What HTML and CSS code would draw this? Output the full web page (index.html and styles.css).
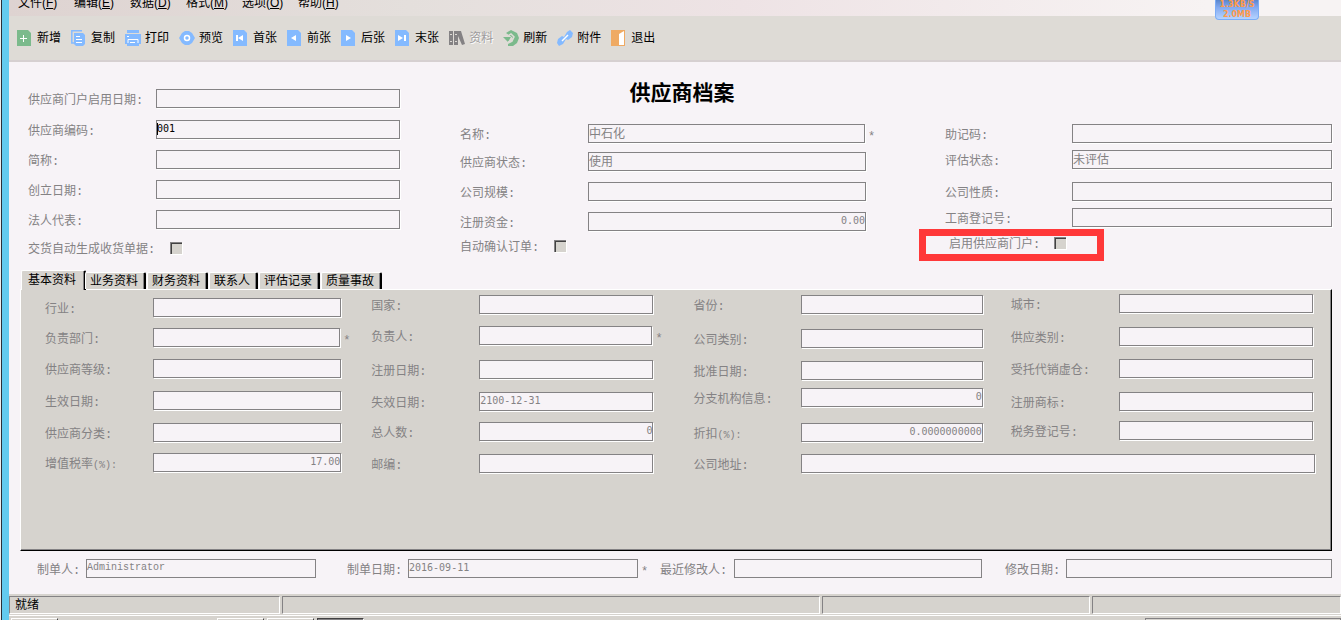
FILE: index.html
```html
<!DOCTYPE html>
<html lang="zh-CN">
<head>
<meta charset="utf-8">
<title>供应商档案</title>
<link rel="stylesheet" href="styles.css">
</head>
<body>
<div class="desktop-edge"></div>
<div class="window">
  <nav class="menubar">
    <button>文件(<u>F</u>)</button>
    <button>编辑(<u>E</u>)</button>
    <button>数据(<u>D</u>)</button>
    <button>格式(<u>M</u>)</button>
    <button>选项(<u>O</u>)</button>
    <button>帮助(<u>H</u>)</button>
  </nav>
  <div class="netmeter"><span>1.3KB/S</span><span>2.0MB</span></div>

  <div class="toolbar">
    <button><svg viewBox="0 0 16 16"><path fill="#7bba8c" d="M0 0h11l3 3v13H0z"/><path stroke="#fff" d="M3 8.500h7M6.500 5v7"/></svg>新增</button>
    <button><svg viewBox="0 0 16 16"><path fill="none" stroke="#84baff" stroke-width="1.500" d="M11 .8H.8V13H3"/><path fill="#84baff" d="M3 3h9l2 2v9l-2 2H5l-2-2z"/><path stroke="#fff" d="M5 6.500h4M5 9.500h6M5 12.500h6"/></svg>复制</button>
    <button><svg viewBox="0 0 16 16"><path fill="#84baff" d="M2 0h12v3H2zM0 4h16v10h-2v2H2v-2H0z"/><path stroke="#fff" fill="none" d="M2 6.500h2M3 13V9.500h10V13M5 12.500h5"/></svg>打印</button>
    <button><svg viewBox="0 0 16 16"><path fill="#84baff" d="M0 8l3-5 3-2h4l3 2 3 5-3 5-3 2H6l-3-2z"/><circle cx="8" cy="8" r="2.500" fill="none" stroke="#fff" stroke-width="1.500"/></svg>预览</button>
    <button><svg viewBox="0 0 16 16"><path fill="#84baff" d="M0 0h11l3 3v13H0z"/><path fill="#fff" d="M3 5h2v6H3zM10 5v6L5 8z"/></svg>首张</button>
    <button><svg viewBox="0 0 16 16"><path fill="#84baff" d="M0 0h11l3 3v13H0z"/><path fill="#fff" d="M9 5v6L4 8z"/></svg>前张</button>
    <button><svg viewBox="0 0 16 16"><path fill="#84baff" d="M0 0h11l3 3v13H0z"/><path fill="#fff" d="M5 5v6l5-3z"/></svg>后张</button>
    <button><svg viewBox="0 0 16 16"><path fill="#84baff" d="M0 0h11l3 3v13H0z"/><path fill="#fff" d="M9 5h2v6H9zM3 5v6l5-3z"/></svg>末张</button>
    <button class="off"><svg viewBox="0 0 16 16"><path fill="#848284" d="M0 1h4v14H0zM5 1h4v14H5zM9 1h3l4 13-3 1-4-9z"/><path stroke="#dedbd6" d="M1 4.500h2M1 11.500h2M6 4.500h2M6 11.500h2"/></svg>资料</button>
    <button><svg viewBox="0 0 16 16"><path fill="#7bba8c" d="M0 7h8l-3 5zM3 3l5-3 6 3 2 5-2 5-4 3H5v-2l4-2 1-4-4-3z"/><path fill="none" stroke="#dedbd6" stroke-width="1.500" d="M5 6l3-2 3 3-2 4-4 1"/></svg>刷新</button>
    <button><svg viewBox="0 0 16 16"><path fill="#84baff" d="M10 2l3-2 3 3-1 4-4 3-2-1-3 5-4 2-2-3 1-4 4-3 2 1z"/><path stroke="#fff" stroke-width="1.500" d="M5 11l6-6"/></svg>附件</button>
    <button><svg viewBox="0 0 16 16"><path fill="#efaa63" d="M0 0h14v16H0z"/><path fill="#fff" d="M8 4l5-3v14H8z"/></svg>退出</button>
  </div>

  <main class="sheet">
    <section class="header">
      <div class="col h1">
        <div class="field"><label for="a1">供应商门户启用日期:</label><input id="a1"></div>
        <div class="field"><label for="a2">供应商编码:</label><input id="a2" class="num active" value="001"></div>
        <div class="field"><label for="a3">简称:</label><input id="a3"></div>
        <div class="field"><label for="a4">创立日期:</label><input id="a4"></div>
        <div class="field"><label for="a5">法人代表:</label><input id="a5"></div>
        <div class="field check wide"><label for="a6">交货自动生成收货单据:</label><input type="checkbox" id="a6"></div>
      </div>
      <div class="col h2">
        <h1>供应商档案</h1>
        <div class="field"><label for="b1">名称:</label><input id="b1" value="中石化"><span class="star">*</span></div>
        <div class="field"><label for="b2">供应商状态:</label><input id="b2" value="使用"></div>
        <div class="field"><label for="b3">公司规模:</label><input id="b3"></div>
        <div class="field"><label for="b4">注册资金:</label><input id="b4" class="num right" value="0.00"></div>
        <div class="field check"><label for="b5">自动确认订单:</label><input type="checkbox" id="b5"></div>
      </div>
      <div class="col h3">
        <div class="field"><label for="c1">助记码:</label><input id="c1"></div>
        <div class="field"><label for="c2">评估状态:</label><input id="c2" value="未评估"></div>
        <div class="field"><label for="c3">公司性质:</label><input id="c3"></div>
        <div class="field"><label for="c4">工商登记号:</label><input id="c4"></div>
        <div class="field check marked"><label for="c5">启用供应商门户:</label><input type="checkbox" id="c5"></div>
      </div>
    </section>

    <div class="tabs" role="tablist">
      <button role="tab" class="current" aria-selected="true">基本资料</button>
      <button role="tab">业务资料</button>
      <button role="tab">财务资料</button>
      <button role="tab">联系人</button>
      <button role="tab">评估记录</button>
      <button role="tab">质量事故</button>
    </div>
    <section class="panel" role="tabpanel">
      <div class="col p1">
        <div class="field"><label for="d1">行业:</label><input id="d1"></div>
        <div class="field"><label for="d2">负责部门:</label><input id="d2"><span class="star">*</span></div>
        <div class="field"><label for="d3">供应商等级:</label><input id="d3"></div>
        <div class="field"><label for="d4">生效日期:</label><input id="d4"></div>
        <div class="field"><label for="d5">供应商分类:</label><input id="d5"></div>
        <div class="field"><label for="d6">增值税率<small>(%):</small></label><input id="d6" class="num right" value="17.00"></div>
      </div>
      <div class="col p2">
        <div class="field"><label for="e1">国家:</label><input id="e1"></div>
        <div class="field"><label for="e2">负责人:</label><input id="e2"><span class="star">*</span></div>
        <div class="field"><label for="e3">注册日期:</label><input id="e3"></div>
        <div class="field"><label for="e4">失效日期:</label><input id="e4" class="num" value="2100-12-31"></div>
        <div class="field"><label for="e5">总人数:</label><input id="e5" class="num right" value="0"></div>
        <div class="field"><label for="e6">邮编:</label><input id="e6"></div>
      </div>
      <div class="region">
        <div class="pair">
          <div class="col p3">
            <div class="field"><label for="f1">省份:</label><input id="f1"></div>
            <div class="field"><label for="f2">公司类别:</label><input id="f2"></div>
            <div class="field"><label for="f3">批准日期:</label><input id="f3"></div>
            <div class="field"><label for="f4">分支机构信息:</label><input id="f4" class="num right" value="0"></div>
            <div class="field"><label for="f5">折扣<small>(%):</small></label><input id="f5" class="num right" value="0.0000000000"></div>
          </div>
          <div class="col p4">
            <div class="field"><label for="g1">城市:</label><input id="g1"></div>
            <div class="field"><label for="g2">供应类别:</label><input id="g2"></div>
            <div class="field"><label for="g3">受托代销虚仓:</label><input id="g3"></div>
            <div class="field"><label for="g4">注册商标:</label><input id="g4"></div>
            <div class="field"><label for="g5">税务登记号:</label><input id="g5"></div>
          </div>
        </div>
        <div class="field"><label for="f6">公司地址:</label><input id="f6"></div>
      </div>
    </section>

    <section class="audit">
      <div class="field maker"><label for="s1">制单人:</label><input id="s1" class="num user" value="Administrator"></div>
      <div class="field made"><label for="s2">制单日期:</label><input id="s2" class="num" value="2016-09-11"><span class="star">*</span></div>
      <div class="field editor"><label for="s3">最近修改人:</label><input id="s3"></div>
      <div class="field edited"><label for="s4">修改日期:</label><input id="s4"></div>
    </section>
  </main>

  <footer class="statusbar"><span>就绪</span><span></span><span></span><span></span></footer>
  <div class="taskbar"><i></i><i class="second"></i><i></i><i class="pressed"></i><i class="tray"></i></div>
</div>
</body>
</html>
```

FILE: styles.css
```css
* { box-sizing: border-box; }

body {
  margin: 0;
  height: 100vh;
  overflow: hidden;
  display: flex;
  background: #f7f3f7;
  color: #000;
  font: 12px/16px "Liberation Mono", "Noto Sans CJK SC", monospace;
}

button, input { font: inherit; color: inherit; margin: 0; }
button { background: none; border: 0; padding: 0; white-space: nowrap; }

.desktop-edge {
  flex: none;
  width: 9px;
  background: #63cbef;
  border-left: 1px solid #eee;
  box-shadow: inset 1px 0 #293039;
}

.window { flex: 1; min-width: 0; display: flex; flex-direction: column; position: relative; }

/* Menu and toolbar */
.menubar {
  flex: none;
  height: 16px;
  padding-left: 9px;
  display: flex;
  align-items: flex-start;
  background: linear-gradient(90deg, #ded3d1, #e4dfdc 30%, #eee3e5 55%, #f7f3f3 90%);
}
.menubar button { width: 56px; line-height: 6px; text-align: left; font-family: "Liberation Sans", "Noto Sans CJK SC", sans-serif; }

.netmeter {
  position: absolute;
  top: 0;
  right: 82px;
  width: 44px;
  height: 20px;
  border: 1px solid #7badf7;
  border-top: 0;
  border-radius: 0 0 4px 4px;
  background: linear-gradient(#5a86ce, #84aaf0 40%, #b5d3ff);
  color: #ff9a4a;
  font: bold 8px/10px "DejaVu Sans", sans-serif;
  text-align: center;
  display: flex;
  flex-direction: column;
}

.toolbar {
  flex: none;
  height: 46px;
  padding-left: 8px;
  display: flex;
  align-items: center;
  gap: 10px;
  background: #dedbd6;
  border-bottom: 2px solid #d6d0d1;
}
.toolbar button { display: flex; align-items: center; gap: 4px; line-height: 20px; padding-top: 2px; }
.toolbar svg { width: 16px; height: 16px; margin-bottom: 2px; }
.toolbar .off { color: #9c9a9c; text-shadow: 1px 1px #fff; }

/* Form sheet */
.sheet { flex: 1; display: flex; flex-direction: column; color: #848284; }

.col { display: grid; align-content: start; }
.field { display: flex; align-items: flex-start; min-width: 0; }
.field label { flex: none; width: 128px; line-height: 25px; white-space: nowrap; }
.field label small { font-size: 10px; }
.field input {
  flex: 1;
  min-width: 0;
  height: 19px;
  padding: 0 0 1px;
  border: 1px solid #848284;
  border-radius: 0;
  outline: 0;
  background: #f7f3f7;
  box-shadow: 1px 1px #fff;
}
.field .num { font: 10px "DejaVu Sans Mono", monospace; padding-bottom: 3px; }
.field .user { font-family: "Liberation Mono", monospace; }
.field .right { text-align: right; }
.field .active { color: #000; background: linear-gradient(#000, #000) 0 2px / 1px 12px no-repeat #f7f3f7; }
.star { width: 0; margin-left: 1px; text-indent: 2px; line-height: 26px; }

.field.check label { width: 94px; line-height: 17px; }
.field.wide label { width: 142px; }
.field.check input {
  appearance: none;
  flex: none;
  width: 12px;
  height: 12px;
  padding: 0;
  border: 0;
  background: #d6d3ce;
  box-shadow: inset 1px 1px #848284, inset 2px 2px #424142, 1px 1px #fff;
}

.header {
  flex: none;
  padding: 0 9px 0 19px;
  display: grid;
  grid-template-columns: 372fr 406fr 406fr;
  column-gap: 60px;
}
.h1 { padding-top: 27px; grid-template-rows: 31px 30px 30px 30px 32px 28px; }
.h2 { grid-template-rows: 62px 28px 30px 30px 28px 30px; }
.h3 { padding: 62px 0 0 19px; grid-template-rows: 26px 32px 26px 21px 32px; }
.h3 label { width: 127px; }

h1 {
  margin: 0;
  padding-left: 38px;
  color: #000;
  font: bold 21px/58px "Noto Sans CJK SC", sans-serif;
  text-align: center;
}

.field.marked {
  width: 185px;
  margin-left: -26px;
  padding: 1px 0 0 23px;
  border: 7px solid #ff3839;
}
.field.marked label { width: 105px; }

/* Tabs */
.tabs {
  flex: none;
  height: 20px;
  padding-left: 12px;
  margin-bottom: -1px;
  display: flex;
  align-items: flex-end;
  gap: 1px;
  color: #000;
  z-index: 1;
}
.tabs button {
  height: 17px;
  margin-bottom: 1px;
  padding: 1px 6px 0 4px;
  border: 1px solid #fff;
  border-right: 2px solid #000;
  border-bottom: 0;
  border-radius: 2px 2px 0 0;
  background: #d6d3ce;
  box-shadow: inset -1px 0 #848284;
}
.tabs .current { height: 20px; margin: 0 -2px 0 0; padding: 1px 8px 0 6px; }

.panel {
  flex: 1;
  margin: 0 9px 0 11px;
  padding: 0 15px 0 24px;
  display: grid;
  grid-template-columns: 296fr 284fr 634fr;
  column-gap: 28px;
  background: #d6d3ce;
  border: 1px solid #fff;
  border-right-color: #000;
  border-bottom-color: #000;
  box-shadow: inset -1px -1px #848284;
}
.panel label { width: 108px; }
.p1 { padding-top: 8px; grid-template-rows: 30px 31px 32px 32px 30px 19px; }
.p2 { padding: 5px 0 0 2px; grid-template-rows: 31px 34px 32px 30px 32px 19px; }
.region { padding: 0 1px 0 12px; }
.pair { display: grid; grid-template-columns: 289fr 304fr; column-gap: 28px; }
.p3 { padding-top: 5px; grid-template-rows: 34px 32px 27px 35px 31px; }
.p4 { padding: 4px 2px 0 0; grid-template-rows: 33px 32px 33px 29px 19px; }

/* Audit line */
.audit {
  flex: none;
  height: 43px;
  padding: 8px 9px 0 28px;
  display: grid;
  grid-template-columns: 279fr 302fr 322fr 329fr;
  column-gap: 21px;
}
.audit input { box-shadow: none; }
.maker label { width: 49px; }
.made { padding-left: 10px; }
.made label, .edited label { width: 61px; }
.editor label { width: 74px; }
.edited { padding-left: 2px; }

/* Status bar and taskbar */
.statusbar {
  flex: none;
  height: 22px;
  padding: 2px 0;
  display: grid;
  grid-template-columns: 271fr 538fr 268fr 249fr;
  column-gap: 2px;
  background: #d6d3ce;
  border-bottom: 1px solid #fff;
}
.statusbar span {
  padding-left: 5px;
  line-height: 18px;
  height: 18px;
  border: 1px solid #fff;
  border-top-color: #848284;
  border-left-color: #848284;
}
.taskbar { flex: none; height: 4px; padding: 2px 0 0 2px; display: flex; gap: 3px; background: #d6d3ce; }
.taskbar i { width: 47px; border: 1px solid #fff; border-right-color: #424142; border-bottom: 0; }
.taskbar .second { margin-left: 156px; }
.taskbar .pressed { background: #848284; border-color: #424142 #fff #424142 #424142; }
.taskbar .tray { width: 196px; margin-left: auto; border-color: #848284; }
```
